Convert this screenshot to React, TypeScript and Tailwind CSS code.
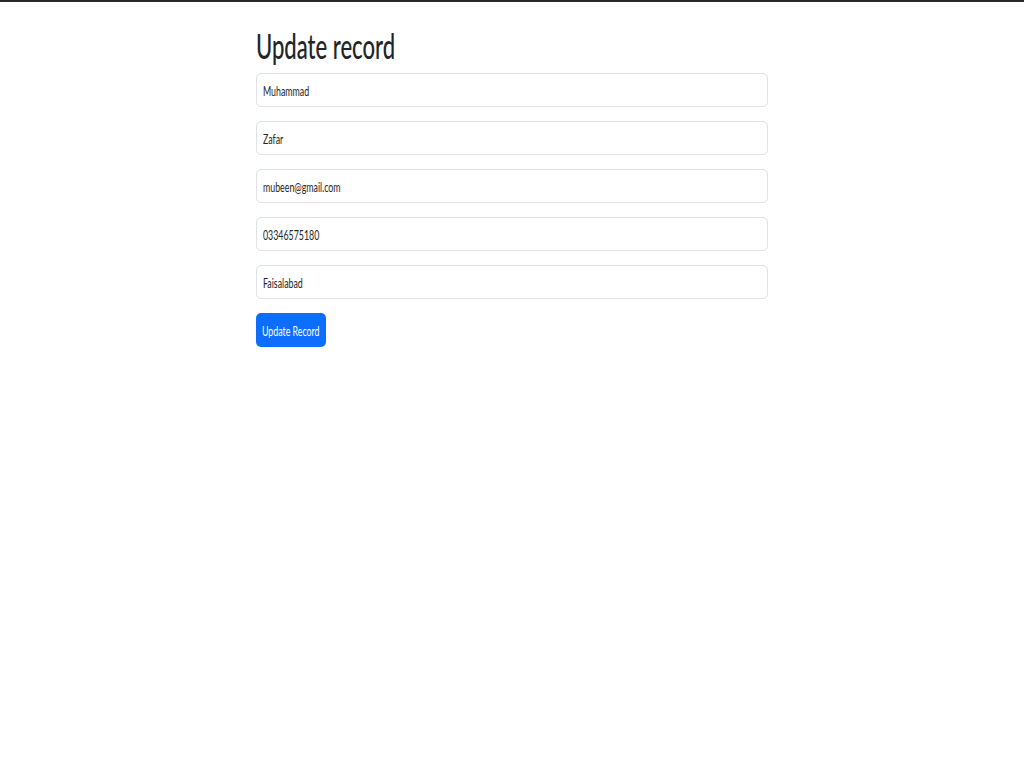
const fields = ["Muhammad", "Zafar", "mubeen@gmail.com", "03346575180", "Faisalabad"];

export default function App() {
  return (
    <div className="min-h-screen bg-white border-t-2 border-[#2a2a2a] font-['Lato',sans-serif] text-[#212529]">
      <div className="w-[512px] mx-auto pt-[22px]">
        <h1 className="h-[42px] leading-[42px] text-[35px] font-medium mb-[7px] whitespace-nowrap">
          <span className="inline-block origin-left scale-x-[0.63]">Update record</span>
        </h1>
        <form className="flex flex-col gap-[14px]" onSubmit={(e) => e.preventDefault()}>
          {fields.map((value) => (
            <div
              key={value}
              className="h-[34px] flex items-center px-[6px] border border-[#dee2e6] rounded-[5px] bg-white text-[14px] whitespace-nowrap"
            >
              <span className="inline-block origin-left scale-x-[0.63]">{value}</span>
            </div>
          ))}
          <button
            type="submit"
            className="w-[70px] h-[34px] flex items-center justify-center rounded-[5px] bg-[#0d6efd] text-white text-[14px] whitespace-nowrap"
          >
            <span className="inline-block scale-x-[0.63]">Update Record</span>
          </button>
        </form>
      </div>
    </div>
  );
}
